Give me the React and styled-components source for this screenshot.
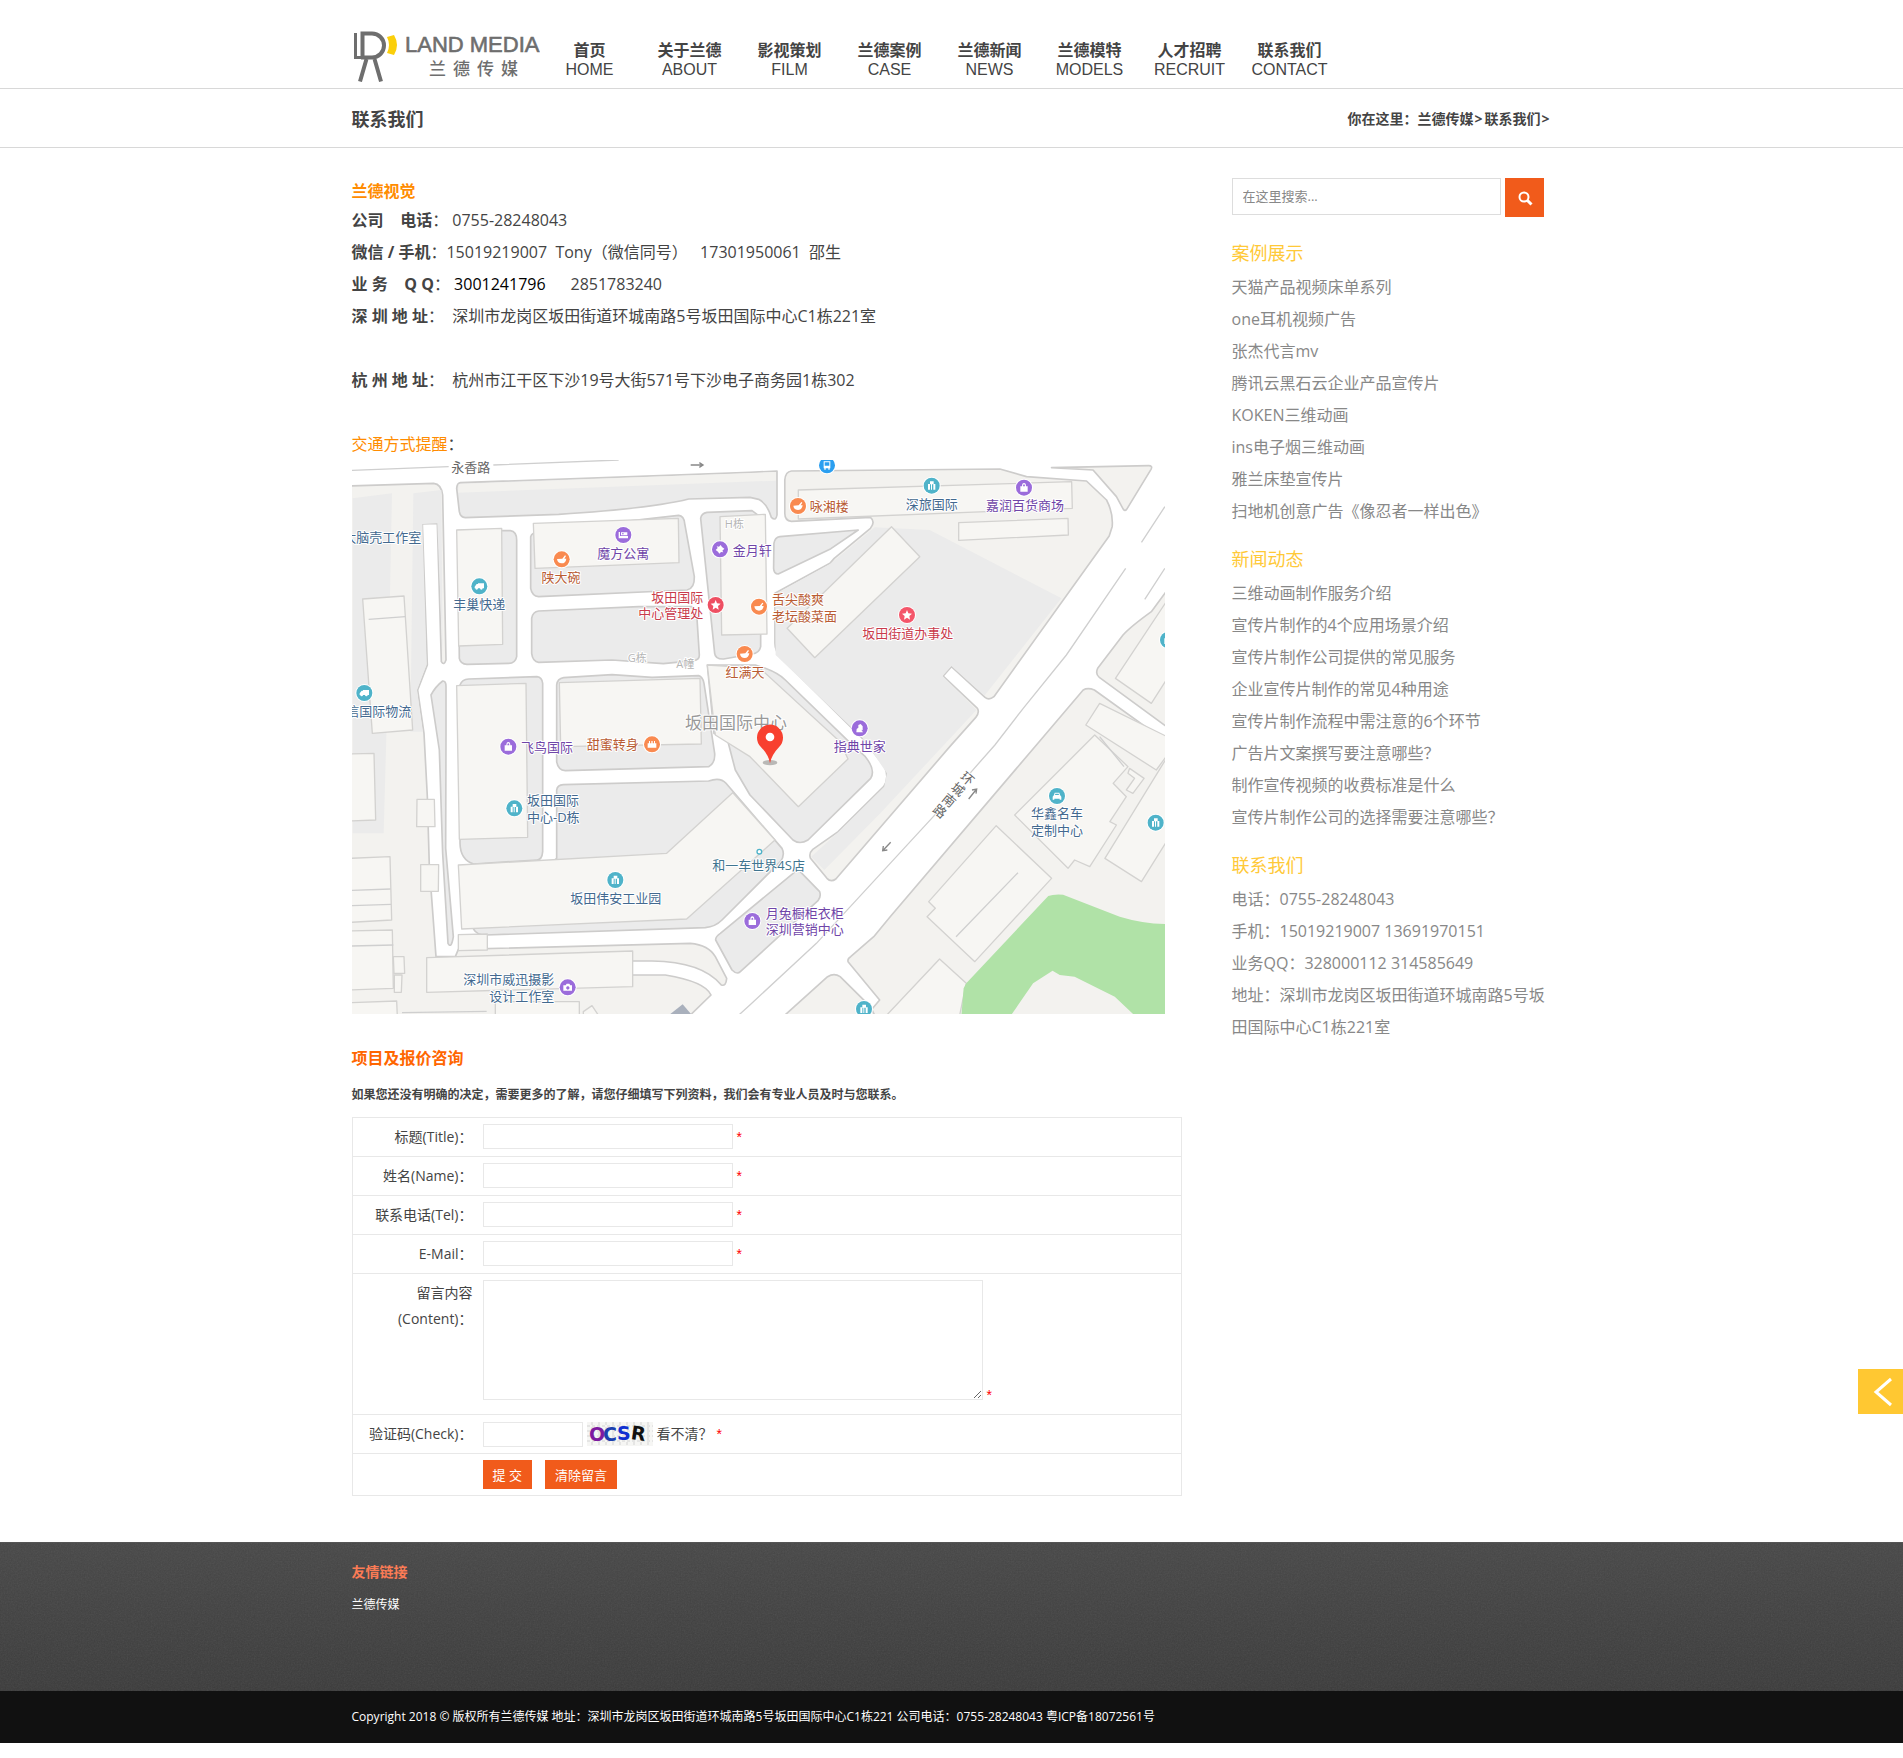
import React, { useState } from 'react';
import styled, { createGlobalStyle } from 'styled-components';

const GlobalStyle = createGlobalStyle`
    * {
        box-sizing: border-box;
    }

    body {
        margin: 0;
        background-color: white;
        color: #444;
        font-family: "Open Sans", "Noto Sans CJK SC", sans-serif;
        font-size: 16px;
    }

    a {
        color: inherit;
        text-decoration: none;
    }

    input, textarea, button {
        font-family: inherit;
    }
`;

/* 1200px column shared by every band of the page */
const Container = styled.div`
    width: 100%;
    max-width: 1200px;
    margin: 0 auto;
`;

const StyledHeader = styled.header`
    border-bottom: 1px solid #d8d8d8;
`;

const HeaderContent = styled(Container)`
    display: flex;
    align-items: flex-end;
    height: 88px;
`;

const LogoLink = styled.a`
    display: block;
    width: 188px;
    height: 60px;
`;

const StyledNav = styled.nav`
    display: flex;
    padding-bottom: 8px;
`;

const NavItem = styled.a`
    width: 100px;
    text-align: center;
    font-size: 16px;
    line-height: 20px;

    &:hover {
        color: #f15b1b;
    }
`;

const NavName = styled.strong`
    display: block;
`;

const NavEnglish = styled.span`
    display: block;
    font-family: "Liberation Sans", Arial, sans-serif;
`;

const TitleBar = styled.div`
    border-bottom: 1px solid #d8d8d8;
`;

const TitleContent = styled(Container)`
    display: flex;
    align-items: center;
    justify-content: space-between;
    height: 58px;
`;

const PageTitle = styled.h1`
    margin: 0;
    font-size: 18px;
`;

const Breadcrumb = styled.div`
    font-size: 14px;
    font-weight: bold;
`;

const Separator = styled.span`
    margin: 0 2px 0 1px;
`;

const Main = styled(Container)`
    display: flex;
    justify-content: space-between;
    align-items: flex-start;
    padding: 30px 0 46px;
`;

const Article = styled.main`
    flex: 0 1 830px;
    min-width: 0;
`;

const Brand = styled.h2`
    margin: 0;
    color: #ff8c00;
    font-size: 16px;
    line-height: 26px;
`;

const InfoLine = styled.p`
    min-height: 32px;
    margin: 0;
    line-height: 32px;
    white-space: pre-wrap;
`;

const Traffic = styled.span`
    color: #ff8c00;
`;

const QQLink = styled.a`
    color: black;
`;

const StyledMap = styled.svg`
    display: block;
    width: 98%;
    max-width: 813px;
    height: auto;
    font-family: "Open Sans", "Noto Sans CJK SC", sans-serif;
`;

const FormTitle = styled.h2`
    margin: 29px 0 10px;
    color: #ff6600;
    font-size: 16px;
    line-height: 30px;
`;

const FormNote = styled.p`
    margin: 0 0 10px;
    font-size: 12px;
    font-weight: bold;
    line-height: 24px;
`;

const FormTable = styled.table`
    width: 100%;
    border: 1px solid #e8e8e8;
    border-bottom: none;
    border-spacing: 0;
    font-size: 14px;
    line-height: 26px;
`;

const LabelCell = styled.th`
    width: 120px;
    padding: 6px 0 6px 10px;
    border-bottom: 1px solid #e8e8e8;
    font-weight: normal;
    text-align: right;
    vertical-align: top;
`;

const FieldCell = styled.td`
    padding: 6px 10px ${props => (props.$tall ? '14px' : '6px')};
    border-bottom: 1px solid #e8e8e8;
    vertical-align: top;
`;

const Field = styled.div`
    display: flex;
    align-items: ${props => (props.$bottom ? 'flex-end' : 'center')};
    gap: ${props => props.$gap || '4px'};
`;

const TextInput = styled.input`
    width: ${props => (props.$short ? '100px' : '250px')};
    height: 25px;
    padding: 0 6px;
    border: 1px solid #e8e8e8;
    font-size: 14px;
`;

const TextArea = styled.textarea`
    display: block;
    width: 500px;
    height: 120px;
    padding: 6px;
    border: 1px solid #e8e8e8;
    font-size: 14px;
`;

const Required = styled.span`
    color: red;
    font-family: "Liberation Sans", Arial, sans-serif;
    line-height: 10px;
`;

const Captcha = styled.svg`
    display: block;
    width: 66px;
    height: 24px;
    font: bold 19px "DejaVu Sans", sans-serif;
`;

const FormButton = styled.button`
    height: 29px;
    padding: 0 10px;
    border: none;
    background-color: #f15b1b;
    color: white;
    font-size: 13px;
    cursor: pointer;
`;

const Sidebar = styled.aside`
    flex: 0 0 320px;
`;

const SearchForm = styled.form`
    display: flex;
    align-items: flex-start;
    gap: 4px;
    margin-bottom: 20px;
`;

const SearchInput = styled.input`
    width: 269px;
    height: 37px;
    padding: 0 10px 2px;
    border: 1px solid #ddd;
    font-size: 13px;

    &::placeholder {
        color: #888;
    }
`;

const SearchButton = styled.button`
    display: flex;
    align-items: center;
    justify-content: center;
    width: 39px;
    height: 39px;
    padding: 2px 0 0 2px;
    border: none;
    background-color: #f15b1b;
    cursor: pointer;
`;

const Widget = styled.section`
    margin-bottom: 16px;
    color: #888;
    line-height: 32px;
`;

const WidgetTitle = styled.h3`
    margin: 0 0 2px;
    color: #ffc938;
    font-size: 18px;
    font-weight: normal;
`;

const WidgetList = styled.ul`
    margin: 0;
    padding: 0;
    list-style: none;
`;

const SideToggle = styled.button`
    position: fixed;
    right: 0;
    bottom: 344px;
    width: 45px;
    height: 45px;
    padding: 0;
    border: none;
    background-color: #ffc832;
    cursor: pointer;
`;

const StyledFooter = styled.footer`
    position: relative;
    min-height: 149px;
    padding-top: 17px;
    border-top: 1px solid #555;
    background: linear-gradient(#474747, #3b3b3b);
    line-height: 24px;
`;

/* grain laid over the gradient */
const Grain = styled.svg`
    position: absolute;
    inset: 0;
    width: 100%;
    height: 100%;
    opacity: 0.1;
    pointer-events: none;
`;

const FooterTitle = styled.h4`
    margin: 0 0 9px;
    color: #ff7850;
    font-size: 14px;
`;

const FooterLink = styled.a`
    display: block;
    color: white;
    font-size: 12px;
`;

const Copyright = styled.div`
    background-color: #111;
    color: white;
    font-size: 12px;
    line-height: 52px;
`;

const menus = [
    ['首页', 'HOME'],
    ['关于兰德', 'ABOUT'],
    ['影视策划', 'FILM'],
    ['兰德案例', 'CASE'],
    ['兰德新闻', 'NEWS'],
    ['兰德模特', 'MODELS'],
    ['人才招聘', 'RECRUIT'],
    ['联系我们', 'CONTACT'],
];

const cases = [
    '天猫产品视频床单系列',
    'one耳机视频广告',
    '张杰代言mv',
    '腾讯云黑石云企业产品宣传片',
    'KOKEN三维动画',
    'ins电子烟三维动画',
    '雅兰床垫宣传片',
    '扫地机创意广告《像忍者一样出色》',
];

const news = [
    '三维动画制作服务介绍',
    '宣传片制作的4个应用场景介绍',
    '宣传片制作公司提供的常见服务',
    '企业宣传片制作的常见4种用途',
    '宣传片制作流程中需注意的6个环节',
    '广告片文案撰写要注意哪些？',
    '制作宣传视频的收费标准是什么',
    '宣传片制作公司的选择需要注意哪些？',
];

const contacts = [
    '电话：0755-28248043',
    '手机：15019219007 13691970151',
    '业务QQ：328000112 314585649',
    '地址：深圳市龙岗区坂田街道环城南路5号坂田国际中心C1栋221室',
];

const fields = [
    ['title', '标题(Title)：'],
    ['name', '姓名(Name)：'],
    ['tel', '联系电话(Tel)：'],
    ['email', 'E-Mail：'],
];

/* map drawing, three units to a pixel */
const LIGHT = '#f3f2ef';
const GREY = '#ebebeb';

const westBlocks = [
    // left side down to the bottom
    [LIGHT, 'M-6 78L245 70Q268 72 272 105L282 600Q276 618 268 605L256 190L211 192L226 615L197 690L216 820L226 1010L232 1220L252 1490H310L319 1468L1015 1450Q1070 1455 1090 1490L1124 1555Q1122 1580 1108 1575Q1050 1505 900 1503H840V1545H940Q1060 1565 1077 1605L1010 1670H-6Z'],
    [GREY, 'M237 705Q250 680 272 663Q282 662 282 680V825L281 1165L304 1430Q298 1468 288 1450L272 1180L262 870Z'],
    [GREY, 'M325 68L1194 37L1275 33V165Q1272 185 1258 172Q1245 130 1220 118L1194 112L1010 117Q900 145 620 163L340 173Q325 172 322 155L314 85Q315 70 325 68Z'],
    [GREY, 'M318 212H475Q494 215 494 240V590Q490 610 470 610L345 613Q325 612 322 595Z'],
    [GREY, 'M536 230Q540 218 560 215L900 175L980 166Q996 168 998 190L1027 350Q1028 385 1005 390L560 410Q540 408 536 385Z'],
    [GREY, 'M539 475Q542 455 560 453L860 440H1020Q1032 445 1034 460L1042 585Q1042 600 1025 602L934 611L780 600L560 607Q542 605 539 580Z'],
    [GREY, 'M1046 175Q1048 160 1065 157L1200 152L1216 164L1226 525V560Q1222 580 1200 582L1115 597Q1090 598 1088 580Z'],
    [GREY, 'M324 675Q330 658 350 657L555 650Q570 652 572 670V1175Q570 1200 555 1200L365 1212Q325 1200 324 1150Z'],
    [GREY, 'M614 675Q616 656 635 653L780 644L900 652L1040 647Q1052 650 1056 670L1088 880Q1090 910 1070 920L640 932Q618 930 614 905Z'],
    [GREY, 'M614 990Q616 975 634 974L1070 963Q1105 950 1122 970L1290 1165Q1300 1185 1285 1205L1110 1380Q1090 1400 1060 1403L400 1425Q375 1425 365 1408L614 1195Z'],
    [GREY, 'M1066 615H1210L1240 625Q1280 640 1300 660L1496 850L1540 890Q1572 930 1556 955L1368 1140Q1343 1155 1323 1140L1194 1005L1150 930L1124 830L1086 820Z'],
    [GREY, 'M1091 1440Q1090 1430 1105 1420L1338 1228L1403 1295Q1408 1310 1398 1322L1165 1535Q1155 1545 1140 1530Z'],
];

const eastBlocks = [
    [LIGHT, 'M1300 60Q1302 35 1320 33L1953 27L2034 50L2216 63L2277 120Q2298 160 2294 200L2285 228L1935 710Q1920 722 1908 712L1806 620L1781 648L1885 745Q1892 758 1880 772L1801 860L1455 1257Q1440 1268 1428 1255L1378 1195Q1372 1180 1385 1168L1462 1115L1600 980Q1618 955 1603 920L1540 840L1290 595Q1270 575 1270 550V400L1437 310L1450 295L1560 205Q1576 185 1560 172L1320 184Q1300 183 1300 160Z'],
    [GREY, 'M1267 250Q1270 232 1285 230L1523 210L1440 266L1280 342Q1267 342 1266 325Z'],
    [LIGHT, 'M2110 23L2405 17Q2418 17 2412 28L2338 148Q2333 155 2328 148L2307 110L2236 30Z'],
    [LIGHT, 'M2465 385L2413 455Q2350 500 2327 525L2250 625Q2242 642 2255 652L2465 804Z'],
    [LIGHT, 'M2206 690Q2220 682 2240 690L2465 850V1670H1545L1588 1620L1492 1505Q1490 1495 1500 1490L1570 1430L1620 1370L2064 855Z'],
    [LIGHT, 'M1295 1670L1430 1550Q1450 1538 1468 1550L1560 1640L1575 1670Z'],
];

/* shading inside the blocks, no outline */
const westShades = [
    [GREY, 'M2 115L120 100L112 500L95 1120H2Z'],
    [GREY, 'M184 100L268 90L272 590L256 190L211 192L224 612L195 690L212 815H175Z'],
    [LIGHT, 'M320 72L1272 36V62L318 98Z'],
];

const eastShades = [
    [GREY, 'M1573 202L1740 210L2140 415L1906 707L1806 618L1779 648L1882 750L1590 1060L1420 1230L1380 1190L1462 1117L1602 980L1610 940L1540 838L1272 585V402L1437 312Z'],
];

const westBuildings = [
    '32,417 156,408 182,810 61,820',
    '314,210 449,205 452,553 320,558',
    '544,190 979,175 981,308 549,325',
    '1104,170 1240,163 1245,522 1109,525',
    '314,677 522,670 527,1132 322,1138',
    '622,668 1044,655 1048,852 626,860',
    '319,1215 944,1180 1142,998 1269,1140 1004,1377 329,1407',
    '1066,615 1224,625 1464,845 1488,897 1339,1040 1194,890 1090,825',
    '-6,882 66,880 71,1080 -6,1083',
    '-6,1195 114,1190 119,1380 -6,1387',
    '-6,1413 121,1410 124,1585 -6,1590',
    '124,1490 156,1490 158,1540 126,1540',
    '127,1545 150,1545 148,1597 127,1597',
    '-6,1628 134,1623 136,1670 -6,1670',
    '195,1018 247,1018 249,1100 194,1100',
    '206,1214 260,1214 259,1294 206,1294',
    '319,1424 406,1422 406,1470 319,1472',
    '224,1493 842,1473 842,1580 224,1597',
    '430,1625 682,1625 682,1670 430,1670',
    '694,1655 720,1637 742,1670 694,1670',
];

const eastBuildings = [
    '1624,200 1710,290 1391,593 1307,505',
    '1341,90 2171,65 2173,145 1341,177',
    '1828,188 2160,175 2161,225 1828,241',
    '2465,415 2304,655 2413,730 2465,650',
    '2256,730 2465,832 2465,880 2428,930 2214,795',
    '2241,825 2342,920 2297,970 2337,1010 2287,1085 2307,1095 2226,1220 2180,1200 2160,1225 1998,1065',
    '2347,925 2391,955 2357,1000 2337,990 2362,955 2342,940',
    '2465,885 2272,1195 2383,1265 2465,1135',
    '1942,1097 2110,1255 1877,1505 1732,1370 1757,1345 1737,1325',
    '1770,1497 1851,1570 1830,1670 1605,1670',
];

const westLines = [
    'M0 31L290 20M424 15L800 0',
    'M0 1291L116 1287M0 1337L117 1333M0 1458L124 1455M50 478L160 470',
    'M150 1658L404 1654',
];

const eastLines = [
    'M2454 140L2383 247M2335 325L2155 585L2024 745L1938 855L1862 940',
    'M2454 325L2393 418M1760 1060L1396 1450L1194 1635L1155 1670',
    'M2008 1238L1820 1430M2330 920L2256 830',
];

const BLUE = '#43698f';
const PURPLE = '#6f45a8';
const ORANGE = '#b95c34';
const RED = '#c93a4b';

/* [text, x, y, colour, anchor, size] */
const mapLabels = [
    ['永香路', 356, 20, '#666', 'middle', 39],
    ['大脑壳工作室', 208, 232, BLUE, 'end', 39],
    ['丰巢快递', 382, 431, BLUE, 'middle', 39],
    ['信国际物流', 178, 753, BLUE, 'end', 39],
    ['魔方公寓', 814, 278, PURPLE, 'middle', 39],
    ['陕大碗', 627, 352, ORANGE, 'middle', 39],
    ['坂田国际', 1054, 410, RED, 'end', 39],
    ['中心管理处', 1054, 459, RED, 'end', 39],
    ['金月轩', 1142, 269, PURPLE, 'start', 39],
    ['H栋', 1147, 190, '#b5b5b5', 'middle', 33],
    ['G栋', 856, 591, '#b5b5b5', 'middle', 33],
    ['A幢', 1000, 610, '#b5b5b5', 'middle', 33],
    ['红满天', 1179, 635, ORANGE, 'middle', 39],
    ['坂田国际中心', 999, 788, '#999', 'start', 51],
    ['飞鸟国际', 507, 860, PURPLE, 'start', 39],
    ['甜蜜转身', 704, 853, ORANGE, 'start', 39],
    ['坂田国际', 525, 1020, BLUE, 'start', 39],
    ['中心-D栋', 525, 1070, BLUE, 'start', 39],
    ['坂田伟安工业园', 791, 1313, BLUE, 'middle', 39],
    ['和一车世界4S店', 1081, 1214, '#3f7590', 'start', 39],
    ['月兔橱柜衣柜', 1241, 1360, PURPLE, 'start', 39],
    ['深圳营销中心', 1241, 1408, PURPLE, 'start', 39],
    ['深圳市威迅摄影', 607, 1557, BLUE, 'end', 39],
    ['设计工作室', 607, 1607, BLUE, 'end', 39],
    ['咏湘楼', 1373, 138, ORANGE, 'start', 39],
    ['深旅国际', 1739, 131, BLUE, 'middle', 39],
    ['嘉润百货商场', 2019, 135, PURPLE, 'middle', 39],
    ['舌尖酸爽', 1260, 416, ORANGE, 'start', 39],
    ['老坛酸菜面', 1260, 467, ORANGE, 'start', 39],
    ['坂田街道办事处', 1667, 518, RED, 'middle', 39],
    ['指典世家', 1523, 858, PURPLE, 'middle', 39],
    ['华鑫名车', 2115, 1060, BLUE, 'middle', 39],
    ['定制中心', 2115, 1110, BLUE, 'middle', 39],
];

const roadName = [
    ['环', 1846, 955],
    ['城', 1819, 987],
    ['南', 1792, 1020],
    ['路', 1764, 1053],
];

/* glyphs drawn around 0,0 inside a circle of radius 24 */
const glyphs = {
    tower: <path d="M-11 12V-5H-5V-13H6V-5H11V12H5V-4H1V12H-2V-4H-5V12Z" />,
    bowl: <path d="M-14 -1L2 -2L10 -12L13 -10L8 -2H14Q12 12 0 12Q-12 12 -14 -1Z" />,
    truck: <path d="M-14 1L-8 -7H-4V-9H14V6H10A4 4 0 0 1 2 6H-4A4 4 0 0 1 -12 6H-14Z" />,
    bag: <path fillRule="evenodd" d="M-11 12V-4H-6Q-6 -14 0 -14T6 -4H11V12ZM-3 -4H3Q3 -10 0 -10T-3 -4Z" />,
    star: <path d="M0 -15L4 -5L15 -4L7 3L9 14L0 8L-9 14L-7 3L-15 -4L-4 -5Z" />,
    bed: <path fillRule="evenodd" d="M-14 -9H-10V3H14V10H-14ZM-7 -8H12V1H-7ZM-4 -5V-2H1V-5Z" />,
    ticket: <path d="M-13 2L-7 -4L-10 -9L-3 -8L2 -13L6 -7L13 -2L7 4L10 9L3 8L-2 13L-6 7Z" />,
    bunny: <path d="M-10 12L-9 2L-4 -2V-10L3 -13L9 -6V6L5 4L10 12Z" />,
    cake: <path d="M-13 10V-3H-9V-10H-6V-3H-2V-10H2V-3H6V-10H9V-3H13V10Z" />,
    camera: <path fillRule="evenodd" d="M-13 10V-6H-6L-3 -11H5L8 -6H13V10ZM0 -3A5 5 0 1 0 1 -3Z" />,
    car: <path fillRule="evenodd" d="M-13 2L-9 -3L-7 -10H7L9 -3L13 2V11H8V8H-8V11H-13ZM-5 -7L-6 -3H6L5 -7Z" />,
    bus: <path fillRule="evenodd" d="M-10 -12H10V9H8V13H4V9H-4V13H-8V9H-10ZM-7 -9V1H7V-9Z" />,
};

const pins = [
    ['truck', 382, 379, '#4fb3c9'],
    ['truck', 37, 699, '#4fb3c9'],
    ['bed', 814, 225, '#9b6cdb'],
    ['bowl', 629, 298, '#f98a50'],
    ['star', 1091, 435, '#ee4f62'],
    ['ticket', 1104, 268, '#9b6cdb'],
    ['bowl', 1178, 582, '#f98a50'],
    ['bag', 469, 860, '#9b6cdb'],
    ['cake', 900, 853, '#f98a50'],
    ['tower', 487, 1045, '#4fb3c9'],
    ['tower', 790, 1260, '#4fb3c9'],
    ['bag', 1201, 1383, '#9b6cdb'],
    ['camera', 647, 1582, '#9b6cdb'],
    ['bowl', 1338, 138, '#f98a50'],
    ['tower', 1739, 77, '#4fb3c9'],
    ['bag', 2016, 83, '#9b6cdb'],
    ['bus', 1425, 16, '#2b9ff0'],
    ['bowl', 1221, 440, '#f98a50'],
    ['star', 1665, 465, '#f4566a'],
    ['bunny', 1523, 805, '#9b6cdb'],
    ['car', 2115, 1008, '#4fb3c9'],
    ['tower', 2411, 1088, '#4fb3c9'],
    ['tower', 2448, 540, '#4fb3c9'],
    ['tower', 1536, 1647, '#4fb3c9'],
];

const Logo = () => (
    <svg width="188" height="60" viewBox="0 0 188 60" role="img" aria-label="LAND MEDIA 兰德传媒">
        <g fill="none" stroke="#6e6e6e">
            <path d="M3.5 5V29.5H9" strokeWidth="3" />
            <path d="M10.5 30V5.500H20A12 12 0 0 1 20 29.500H9" strokeWidth="4" />
            <path d="M14.500 31L8 53.500M22.500 31L29 53.500" strokeWidth="4" />
        </g>
        <path d="M35 9L42 7Q48 17 42 27L35 25Q39 17 35 9Z" fill="#fbcf0a" />
        <text x="53" y="24" fill="#6e6e6e" stroke="#6e6e6e" strokeWidth="0.6" fontFamily="Liberation Sans, Arial, sans-serif" fontSize="22">LAND MEDIA</text>
        <text x="77 101 125 149" y="47" fill="#6e6e6e" fontSize="17" fontWeight="500">兰德传媒</text>
    </svg>
);

const Shapes = ({ blocks, shades, buildings }) => (
    <>
        <g stroke="#cdcccb" strokeWidth="5" strokeLinejoin="round">
            {blocks.map(([fill, d]) => <path key={d} d={d} fill={fill} />)}
        </g>
        {shades.map(([fill, d]) => <path key={d} d={d} fill={fill} />)}
        <g fill="#f7f6f3" stroke="#d3d2d0" strokeWidth="4" strokeLinejoin="round">
            {buildings.map(points => <polygon key={points} points={points} />)}
        </g>
    </>
);

const Lines = ({ lines }) => (
    <g fill="none" stroke="#cfcfcf" strokeWidth="4">
        {lines.map(d => <path key={d} d={d} />)}
    </g>
);

const LocationMap = () => (
    <StyledMap viewBox="0 0 2439 1662" role="img" aria-label="坂田国际中心">
        <rect width="2439" height="1662" fill="#fff" />
        <Shapes blocks={westBlocks} shades={westShades} buildings={westBuildings} />
        <path d="M955 1662L992 1633L1017 1662Z" fill="#a9b0bc" />
        <Lines lines={westLines} />
        {/* the east half was traced slightly wider than the west one */}
        <g transform="translate(14 0) scale(0.988 1)">
            <Shapes blocks={eastBlocks} shades={eastShades} buildings={eastBuildings} />
            <path d="M2100 1308Q2115 1302 2145 1304L2317 1370Q2390 1392 2465 1392V1670H2366L2302 1610L2180 1550L2135 1545L2113 1532L2054 1570L1984 1670H1836L1843 1585L1851 1570Z" fill="#b0e2a7" />
            <Lines lines={eastLines} />
        </g>
        <g fill="none" stroke="#888" strokeWidth="4">
            <path d="M1016 15H1052M1042 8L1053 15L1042 22" />
            <path d="M1850 1017L1874 987M1860 990L1874 987L1872 1001" />
            <path d="M1616 1147L1592 1172M1594 1158L1592 1172L1606 1170" />
        </g>
        <g dominantBaseline="central" stroke="#fff" strokeWidth="6" strokeLinejoin="round" paintOrder="stroke">
            {mapLabels.map(([text, x, y, fill, anchor, size]) => (
                <text key={`${text}${x}`} x={x} y={y} fill={fill} textAnchor={anchor} fontSize={size}>{text}</text>
            ))}
            {roadName.map(([text, x, y]) => (
                <text key={text} x={x} y={y} fill="#666" textAnchor="middle" fontSize="39" transform={`rotate(40 ${x} ${y})`}>{text}</text>
            ))}
        </g>
        <circle cx="1222" cy="1175" r="7" fill="#fff" stroke="#4fb3c9" strokeWidth="4" />
        {pins.map(([kind, x, y, fill]) => (
            <g key={`${x}-${y}`} transform={`translate(${x} ${y})`}>
                <circle r="27" fill="#fff" />
                <circle r="24" fill={fill} />
                <g fill="#fff">{glyphs[kind]}</g>
            </g>
        ))}
        <ellipse cx="1254" cy="908" rx="22" ry="8" fill="#000" opacity="0.25" />
        <path d="M1254 910Q1250 885 1226 860A39 39 0 1 1 1282 860Q1258 885 1254 910Z" fill="#f8402f" />
        <circle cx="1254" cy="831" r="13" fill="#fff" />
    </StyledMap>
);

const Header = () => (
    <StyledHeader>
        <HeaderContent>
            <LogoLink href="#">
                <Logo />
            </LogoLink>
            <StyledNav>
                {menus.map(([name, english]) => (
                    <NavItem key={english} href="#">
                        <NavName>{name}</NavName>
                        <NavEnglish>{english}</NavEnglish>
                    </NavItem>
                ))}
            </StyledNav>
        </HeaderContent>
    </StyledHeader>
);

const CompanyInfo = () => (
    <section>
        <Brand>兰德视觉</Brand>
        <InfoLine><strong>{'公司    电话'}</strong>{'： 0755-28248043'}</InfoLine>
        <InfoLine><strong>微信 / 手机</strong>{'：15019219007  Tony（微信同号）   17301950061  邵生'}</InfoLine>
        <InfoLine><strong>{'业 务    Q Q'}</strong>{'： '}<QQLink href="#">3001241796</QQLink>{'      2851783240'}</InfoLine>
        <InfoLine><strong>深 圳 地 址</strong>{'：  深圳市龙岗区坂田街道环城南路5号坂田国际中心C1栋221室'}</InfoLine>
        <InfoLine />
        <InfoLine><strong>杭 州 地 址</strong>{'：  杭州市江干区下沙19号大街571号下沙电子商务园1栋302'}</InfoLine>
        <InfoLine />
        <InfoLine><Traffic>交通方式提醒</Traffic>：</InfoLine>
        <LocationMap />
    </section>
);

const MessageForm = () => {
    const [seed, setSeed] = useState(3);

    return (
        <form onSubmit={e => e.preventDefault()}>
            <FormTitle>项目及报价咨询</FormTitle>
            <FormNote>如果您还没有明确的决定，需要更多的了解，请您仔细填写下列资料，我们会有专业人员及时与您联系。</FormNote>
            <FormTable>
                <tbody>
                    {fields.map(([id, label]) => (
                        <tr key={id}>
                            <LabelCell><label htmlFor={id}>{label}</label></LabelCell>
                            <FieldCell>
                                <Field>
                                    <TextInput id={id} name={id} />
                                    <Required>*</Required>
                                </Field>
                            </FieldCell>
                        </tr>
                    ))}
                    <tr>
                        <LabelCell><label htmlFor="content">留言内容(Content)：</label></LabelCell>
                        <FieldCell $tall>
                            <Field $bottom>
                                <TextArea id="content" name="content" />
                                <Required>*</Required>
                            </Field>
                        </FieldCell>
                    </tr>
                    <tr>
                        <LabelCell><label htmlFor="check">验证码(Check)：</label></LabelCell>
                        <FieldCell>
                            <Field>
                                <TextInput id="check" name="check" $short />
                                <Captcha viewBox="0 0 66 24" role="img" aria-label="OCSR">
                                    <rect width="66" height="24" fill="#f6f6f4" />
                                    <path d="M0 4H66M0 9H66M0 14H66M0 19H66M5 0V24M12 0V24M19 0V24M26 0V24M33 0V24M40 0V24M47 0V24M54 0V24M61 0V24" stroke="#d4d4d4" strokeWidth="1" strokeDasharray={`${seed} 2`} />
                                    <text x="2" y="19" fill="#7d1aa0">O</text>
                                    <text x="16" y="19" fill="#1c3fae">C</text>
                                    <text x="30" y="18" fill="#1030d0">S</text>
                                    <text x="44" y="18" fill="#111" transform="rotate(8 50 12)">R</text>
                                </Captcha>
                                <a href="#check" onClick={() => setSeed(seed % 5 + 1)}>看不清？</a>
                                <Required>*</Required>
                            </Field>
                        </FieldCell>
                    </tr>
                    <tr>
                        <LabelCell as="td" />
                        <FieldCell>
                            <Field $gap="13px">
                                <FormButton type="submit">提 交</FormButton>
                                <FormButton type="reset">清除留言</FormButton>
                            </Field>
                        </FieldCell>
                    </tr>
                </tbody>
            </FormTable>
        </form>
    );
};

const LinkWidget = ({ title, items }) => (
    <Widget>
        <WidgetTitle>{title}</WidgetTitle>
        <WidgetList>
            {items.map(item => <li key={item}><a href="#">{item}</a></li>)}
        </WidgetList>
    </Widget>
);

const App = () => (
    <div lang="zh-CN">
        <GlobalStyle />
        <Header />
        <TitleBar>
            <TitleContent>
                <PageTitle>联系我们</PageTitle>
                <Breadcrumb>
                    你在这里：<a href="#">兰德传媒</a><Separator>&gt;</Separator><a href="#">联系我们</a><Separator>&gt;</Separator>
                </Breadcrumb>
            </TitleContent>
        </TitleBar>
        <Main>
            <Article>
                <CompanyInfo />
                <MessageForm />
            </Article>
            <Sidebar>
                <SearchForm onSubmit={e => e.preventDefault()}>
                    <SearchInput type="text" aria-label="搜索" placeholder="在这里搜索..." />
                    <SearchButton type="submit" aria-label="搜索">
                        <svg width="15" height="15" viewBox="0 0 15 15" fill="none" stroke="#fff">
                            <circle cx="6" cy="6" r="4.500" strokeWidth="2" />
                            <path d="M9 9L13.500 13.500" strokeWidth="3" />
                        </svg>
                    </SearchButton>
                </SearchForm>
                <LinkWidget title="案例展示" items={cases} />
                <LinkWidget title="新闻动态" items={news} />
                <Widget>
                    <WidgetTitle>联系我们</WidgetTitle>
                    <WidgetList>
                        {contacts.map(item => <li key={item}>{item}</li>)}
                    </WidgetList>
                </Widget>
            </Sidebar>
        </Main>
        <StyledFooter>
            <Grain aria-hidden="true">
                <filter id="grain">
                    <feTurbulence type="fractalNoise" baseFrequency="0.7" numOctaves="2" />
                    <feColorMatrix type="saturate" values="0" />
                </filter>
                <rect width="100%" height="100%" filter="url(#grain)" />
            </Grain>
            <Container>
                <FooterTitle>友情链接</FooterTitle>
                <FooterLink href="#">兰德传媒</FooterLink>
            </Container>
        </StyledFooter>
        <Copyright>
            <Container>Copyright 2018 © 版权所有兰德传媒 地址：深圳市龙岗区坂田街道环城南路5号坂田国际中心C1栋221 公司电话：0755-28248043 粤ICP备18072561号</Container>
        </Copyright>
        <SideToggle type="button" aria-label="展开">
            <svg width="45" height="45" viewBox="0 0 45 45" fill="none" stroke="#fff" strokeWidth="3">
                <path d="M33 10L18 23L33 36" />
            </svg>
        </SideToggle>
    </div>
);

export default App;
